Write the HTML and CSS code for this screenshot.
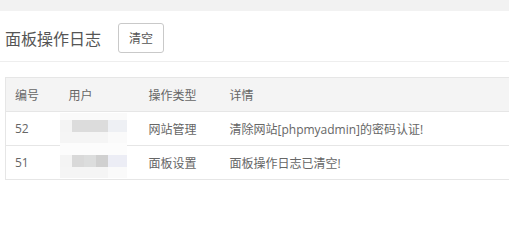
FILE: index.html
```html
<!DOCTYPE html>
<html lang="zh-CN">
<head>
<meta charset="utf-8">
<title>面板操作日志</title>
<link rel="stylesheet" href="styles.css">
</head>
<body>
<div class="topband"></div>
<div class="panel">
  <div class="panel-head">
    <h1 class="title">面板操作日志</h1>
    <button class="btn">清空</button>
  </div>
  <div class="panel-body">
    <div class="table-wrap">
      <table class="log-table">
        <thead>
          <tr><th class="c1">编号</th><th class="c2">用户</th><th class="c3">操作类型</th><th>详情</th></tr>
        </thead>
        <tbody>
          <tr><td>52</td><td></td><td>网站管理</td><td>清除网站[phpmyadmin]的密码认证!</td></tr>
          <tr><td>51</td><td></td><td>面板设置</td><td>面板操作日志已清空!</td></tr>
        </tbody>
      </table>
      <div class="mosaic">
        <div class="mrow r-top"><span class="m1"></span><span class="m1"></span><span class="m1"></span><span class="m1"></span><span class="m1"></span></div>
        <div class="mrow r-a"><span class="ma"></span><span class="mb"></span><span class="mb"></span><span class="mb"></span><span class="mc"></span></div>
        <div class="mrow r-b"><span class="m2"></span><span class="m2"></span><span class="m2"></span><span class="m2"></span><span class="m1"></span></div>
        <div class="mrow r-c"><span class="m0"></span><span class="m0"></span><span class="m0"></span><span class="m0"></span><span class="m0"></span></div>
        <div class="mrow r-a"><span class="ma"></span><span class="md"></span><span class="me"></span><span class="mf"></span><span class="mg"></span></div>
        <div class="mrow r-b"><span class="m2"></span><span class="m2"></span><span class="m2"></span><span class="m2"></span><span class="m1"></span></div>
      </div>
    </div>
  </div>
</div>
</body>
</html>
```

FILE: styles.css
```css
html, body {
  margin: 0;
  padding: 0;
  background: #fff;
  font-family: "Open Sans", "Noto Sans CJK SC", sans-serif;
  color: #666;
}
.topband {
  height: 11px;
  background: #f2f2f2;
}
.panel {
  background: #fff;
}
.panel-head {
  height: 51px;
  display: flex;
  align-items: center;
  padding-left: 5px;
  border-bottom: 1px solid #eee;
  box-sizing: border-box;
  padding-top: 3px;
}
.title {
  margin: 0;
  font-size: 16px;
  font-weight: normal;
  color: #555;
  font-family: "Noto Sans CJK SC", sans-serif;
  line-height: 20px;
}
.btn {
  margin-left: 17px;
  width: 46px;
  height: 30px;
  border: 1px solid #c9c9c9;
  border-radius: 3px;
  background: #fff;
  color: #555;
  font-size: 12px;
  font-family: "Noto Sans CJK SC", sans-serif;
  padding: 0;
}
.panel-body {
  padding: 15px 0 0 5px;
  overflow: hidden;
}
.table-wrap {
  position: relative;
  width: 540px;
}
.log-table {
  width: 540px;
  border-collapse: collapse;
  font-size: 12px;
  table-layout: fixed;
  border: 1px solid #e6e6e6;
}
.log-table th, .log-table td {
  height: 34px;
  padding: 0 0 0 9px;
  text-align: left;
  font-weight: normal;
  border-bottom: 1px solid #e6e6e6;
  color: #666;
  white-space: nowrap;
  box-sizing: border-box;
}
.log-table thead tr {
  background: #f4f4f4;
}
.c1 { width: 54px; }
.c2 { width: 80px; }
.c3 { width: 81px; }
.mosaic {
  position: absolute;
  left: 55px;
  top: 36px;
  width: 67px;
}
.mrow {
  display: flex;
  height: 12px;
  background: #fafafa;
}
.mrow span {
  width: 12px;
  height: 100%;
}
.mrow span:last-child { width: 19px; }
.r-top { height: 7px; }
.r-a { height: 12px; }
.r-b { height: 11px; }
.r-c { height: 12px; }
.m0 { background: #fcfcfc; }
.m1 { background: #fafafa; }
.m2 { background: #f5f5f5; }
.ma { background: #f4f4f4; }
.mb { background: #dcdcdc; }
.mc { background: #eef0f4; }
.md { background: #d9d9d9; }
.me { background: #dcdddd; }
.mf { background: #d0d0d0; }
.mg { background: #ecedf5; }
```
